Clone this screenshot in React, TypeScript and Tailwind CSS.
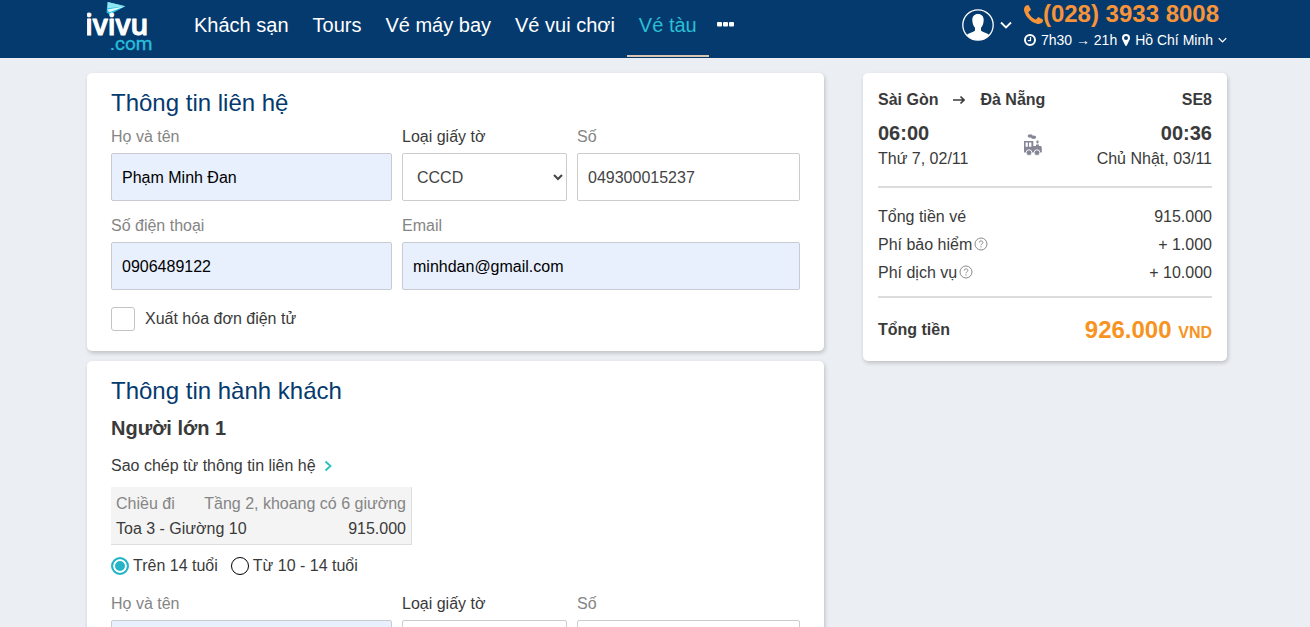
import React, { useId, useState } from 'react';

function Logo() {
  return (
    <svg viewBox="0 0 70 56" className="h-[56px] w-[70px]" role="img" aria-label="ivivu.com">
      <path d="M20.700 2 38.300 6.300 23 14.500 19.500 12.500Z" fill="#2cc4e0" />
      <path d="M20.700 2 38.300 6.300 20.400 8.200Z" fill="#8fe6f2" />
      <path d="M20.200 9.500 38.300 6.300 22.400 12.300Z" fill="#dff8fc" />
      <text
        x="-2"
        y="35"
        fontFamily="'Open Sans', sans-serif"
        fontSize="28"
        fontWeight="600"
        fill="#fff"
        stroke="#fff"
        strokeWidth="1"
        strokeLinejoin="round"
      >
        ivivu
      </text>
      <text x="23" y="50" fontFamily="Roboto, sans-serif" fontSize="19" fill="#27bfdc" stroke="#27bfdc" strokeWidth=".4">
        .com
      </text>
    </svg>
  );
}

function ChevronDown({ className }: { className: string }) {
  return (
    <svg viewBox="0 0 12 8" className={className} fill="none" stroke="currentColor" strokeWidth="1.8" aria-hidden="true">
      <path d="M1 1.5 6 6.5 11 1.5" />
    </svg>
  );
}

function Avatar() {
  return (
    <svg viewBox="0 0 32 32" className="h-8 w-8" aria-hidden="true">
      <circle cx="16" cy="16" r="15.2" fill="none" stroke="#fff" strokeWidth="1.3" />
      <path
        d="M16 5c-3.700 0-5.800 2.600-5.700 6 .1 3.200 1 6 2.700 7.700v2.800c-.8 1.600-6 2-8.200 4.500A14.800 14.800 0 0 0 16 31a14.800 14.800 0 0 0 11.200-5c-2.200-2.500-7.400-2.900-8.200-4.500v-2.800c1.700-1.700 2.600-4.500 2.700-7.700.1-3.400-2-6-5.700-6z"
        fill="#fff"
      />
    </svg>
  );
}

function Phone() {
  return (
    <svg viewBox="0 128 1408 1408" className="h-[19px] w-[19px]" fill="currentColor" aria-hidden="true">
      <path d="M1408 1240q0 27-10 70.5t-21 68.5q-21 50-122 106-94 51-186 51-27 0-53-3.500t-57.500-12.500-47-14.500-55.500-20.500-49-18q-98-35-175-83-127-79-264-216t-216-264q-48-77-83-175-3-9-18-49t-20.500-55.500-14.500-47-12.500-57.500-3.500-53q0-92 51-186 56-101 106-122 25-11 68.500-21t70.500-10q14 0 21 3 18 6 53 76 11 19 30 54t35 63.500 31 53.500q3 4 17.500 25t21.500 35.500 7 28.500q0 20-28.500 50t-62 55-62 53-28.500 46q0 9 5 22.500t8.500 20.500 14 24 11.500 19q76 137 174 235t235 174q2 1 19 11.500t24 14 20.500 8.500 22.500 5q18 0 46-28.500t53-62 55-62 50-28.500q14 0 28.500 7t35.500 21.500 25 17.500q25 15 53.500 31t63.500 35 54 30q70 35 76 53 3 7 3 21z" />
    </svg>
  );
}

function Clock() {
  return (
    <svg viewBox="0 0 12 12" className="h-3 w-3" fill="none" stroke="currentColor" aria-hidden="true">
      <circle cx="6" cy="6" r="5" strokeWidth="2" />
      <path d="M6.500 3v3.600H3.800" strokeWidth="1.200" />
    </svg>
  );
}

function Pin() {
  return (
    <svg viewBox="0 0 8 12" className="h-3 w-2" fill="currentColor" aria-hidden="true">
      <path
        fillRule="evenodd"
        d="M4 0a4 4 0 0 0-4 4c0 .7.100 1.200.4 1.700l2.800 5.800c.3.600 1.300.6 1.600 0l2.800-5.800c.3-.5.400-1 .4-1.700a4 4 0 0 0-4-4zm0 2a2 2 0 1 1 0 4 2 2 0 0 1 0-4z"
      />
    </svg>
  );
}

function Train() {
  return (
    <svg viewBox="0 0 18 22" className="h-[22px] w-[18px]" fill="#858796" aria-hidden="true">
      <ellipse cx="6.200" cy="2" rx="2.600" ry="1.700" />
      <ellipse cx="9.600" cy="3.300" rx="2.600" ry="1.700" />
      <path
        fillRule="evenodd"
        d="M0 7h9.300v5H12v-1.500h3V12h2.200l.6 2v4.500H0zM1.600 8.500v4.200h2.200V8.500zM5 8.500v4.200h2.400V8.500z"
      />
      <rect x="12.500" y="6.500" width="2" height="3" rx=".8" />
      <g stroke="#fff" strokeWidth=".9">
        <circle cx="5" cy="18.700" r="2.900" />
        <circle cx="13" cy="18.700" r="2.900" />
      </g>
    </svg>
  );
}

function Help({ label }: { label: string }) {
  return (
    <button type="button" aria-label={label} className="mb-[2px] text-[#8a8a8a]">
      <svg viewBox="0 0 14 14" className="h-[14px] w-[14px]" fill="none" stroke="currentColor" aria-hidden="true">
        <circle cx="7" cy="7" r="6" strokeWidth="1" />
        <path d="M5.200 5.600c0-2.300 3.700-2.300 3.700-.1C8.900 6.800 7 6.700 7 8.300M7 9.300v1.200" strokeWidth="1" />
      </svg>
    </button>
  );
}

const NAV = ['Khách sạn', 'Tours', 'Vé máy bay', 'Vé vui chơi', 'Vé tàu'];

function Header() {
  return (
    <header className="flex h-[58px] items-start justify-between bg-[#053a6e] pr-[83px] pl-[87px] text-white">
      <div className="flex">
        <a href="#home" aria-label="ivivu.com">
          <Logo />
        </a>
        <nav className="ml-[25px] flex items-start text-xl" aria-label="Chính">
          {NAV.map((item) => (
            <a
              key={item}
              href="#nav"
              className={
                item === 'Vé tàu'
                  ? 'h-[57px] border-b-2 border-[#d9c5b0] px-3 pt-[11px] leading-7 text-[#2abfd4]'
                  : 'h-[57px] px-3 pt-[11px] leading-7'
              }
            >
              {item}
            </a>
          ))}
          <button type="button" aria-label="Thêm" className="flex h-12 items-center px-2">
            <svg viewBox="0 0 17 5" className="h-[5px] w-[17px]" fill="#fff" aria-hidden="true">
              <rect width="5" height="4.500" rx="1" />
              <rect x="6" width="5" height="4.500" rx="1" />
              <rect x="12" width="5" height="4.500" rx="1" />
            </svg>
          </button>
        </nav>
      </div>
      <div className="flex items-start gap-3">
        <button type="button" aria-label="Tài khoản" className="mt-[9px] flex items-center gap-[6px]">
          <Avatar />
          <ChevronDown className="h-2 w-3" />
        </button>
        <div>
          <a href="tel:02839338008" className="flex h-7 items-center text-2xl font-bold text-[#f7943a]">
            <Phone />
            (028) 3933 8008
          </a>
          <button type="button" className="flex h-6 items-center gap-[5px] text-sm">
            <Clock />
            <span>7h30 → 21h</span>
            <Pin />
            <span>Hồ Chí Minh</span>
            <ChevronDown className="h-[6px] w-[9px]" />
          </button>
        </div>
      </div>
    </header>
  );
}

type FieldProps = {
  label: string;
  value?: string;
  type?: string;
  filled?: boolean;
  wide?: boolean;
};

function Field({ label, value = '', type = 'text', filled, wide }: FieldProps) {
  const id = useId();
  return (
    <div className={wide ? 'col-span-2 flex min-w-0 flex-col gap-1' : 'flex min-w-0 flex-col gap-1'}>
      <label htmlFor={id} className="leading-6 text-[#858585]">
        {label}
      </label>
      <input
        id={id}
        type={type}
        defaultValue={value}
        className={
          filled
            ? 'h-12 w-full rounded-xs border border-[#c8ccd2] bg-[#e8f0fe] px-[10px] pt-[2px] text-black'
            : 'h-12 w-full rounded-xs border border-[#cccccc] bg-white px-[10px] pt-[2px] text-[#444444]'
        }
      />
    </div>
  );
}

function DocumentSelect() {
  const id = useId();
  return (
    <div className="flex min-w-0 flex-col gap-1">
      <label htmlFor={id} className="leading-6">
        Loại giấy tờ
      </label>
      <select
        id={id}
        defaultValue="CCCD"
        className="h-12 w-full rounded-xs border border-[#cccccc] bg-white pl-[10px] text-[#444444]"
      >
        <option>CCCD</option>
      </select>
    </div>
  );
}

const GRID = 'grid grid-cols-[281fr_165fr_223fr] gap-x-[10px] gap-y-[13px]';
const CARD = 'rounded-[5px] bg-white shadow-[1px_2px_4px_rgba(0,0,0,0.2)]';

function ContactCard() {
  return (
    <section className={`${CARD} px-6 pt-[14px] pb-5`}>
      <h2 className="mb-[6px] text-2xl leading-8 text-[#053a6e]">Thông tin liên hệ</h2>
      <div className={GRID}>
        <Field label="Họ và tên" value="Phạm Minh Đan" filled />
        <DocumentSelect />
        <Field label="Số" value="049300015237" />
        <Field label="Số điện thoại" value="0906489122" type="tel" filled />
        <Field label="Email" value="minhdan@gmail.com" type="email" filled wide />
      </div>
      <label className="mt-[17px] flex items-center gap-[10px] leading-6">
        <input
          type="checkbox"
          className="h-6 w-6 appearance-none rounded-[3px] border border-[#c4c4c4] bg-white checked:bg-[#26bed6]"
        />
        Xuất hóa đơn điện tử
      </label>
    </section>
  );
}

const AGES = ['Trên 14 tuổi', 'Từ 10 - 14 tuổi'];

function PassengerCard() {
  const [age, setAge] = useState(AGES[0]);
  return (
    <section className={`${CARD} px-6 pt-[14px] pb-5`}>
      <h2 className="text-2xl leading-8 text-[#053a6e]">Thông tin hành khách</h2>
      <h3 className="mt-[7px] text-xl leading-7 font-bold">Người lớn 1</h3>
      <button type="button" className="mt-3 flex items-center gap-2 leading-6">
        Sao chép từ thông tin liên hệ
        <svg viewBox="0 0 8 12" className="h-3 w-2" fill="none" stroke="#26bfbf" strokeWidth="1.800" aria-hidden="true">
          <path d="M1.500 1.500 6.500 6 1.500 10.500" />
        </svg>
      </button>
      <div className="mt-[9px] w-[301px] border-r border-b border-[#dedede] bg-[#f4f4f4] px-[5px] pt-1 pb-[3px] leading-[25px]">
        <div className="flex justify-between text-[#858585]">
          <span>Chiều đi</span>
          <span>Tầng 2, khoang có 6 giường</span>
        </div>
        <div className="flex justify-between">
          <span>Toa 3 - Giường 10</span>
          <span>915.000</span>
        </div>
      </div>
      <div role="radiogroup" aria-label="Độ tuổi" className="mt-[9px] mb-[14px] flex gap-[13px]">
        {AGES.map((item) => (
          <label key={item} className="flex items-center gap-1 leading-6">
            <input
              type="radio"
              name="age"
              checked={age === item}
              onChange={() => setAge(item)}
              className="h-[18px] w-[18px] appearance-none rounded-full border border-black bg-white checked:border-2 checked:border-[#26b5c6] checked:bg-[#26b5c6] checked:shadow-[inset_0_0_0_2px_white]"
            />
            {item}
          </label>
        ))}
      </div>
      <div className={GRID}>
        <Field label="Họ và tên" filled />
        <DocumentSelect />
        <Field label="Số" />
      </div>
    </section>
  );
}

function Summary() {
  return (
    <aside className={`${CARD} w-[364px] shrink-0 p-[15px]`}>
      <div className="flex items-center leading-6 font-bold">
        <span>Sài Gòn</span>
        <svg viewBox="0 0 12 10" className="mx-[15px] h-[10px] w-3" fill="none" stroke="currentColor" strokeWidth="1.600" aria-label="đến">
          <path d="M0 5h11M7.500 1.500 11 5 7.500 8.500" />
        </svg>
        <span>Đà Nẵng</span>
        <span className="ml-auto">SE8</span>
      </div>
      <div className="mt-[7px] flex items-center justify-between">
        <div>
          <div className="text-xl leading-7 font-bold">06:00</div>
          <div className="leading-6">Thứ 7, 02/11</div>
        </div>
        <Train />
        <div className="text-right">
          <div className="text-xl leading-7 font-bold">00:36</div>
          <div className="leading-6">Chủ Nhật, 03/11</div>
        </div>
      </div>
      <hr className="mt-[15px] border-t-2 border-[#dcdcdc]" />
      <dl className="mt-[15px] mb-[9px] leading-7">
        <div className="flex justify-between">
          <dt>Tổng tiền vé</dt>
          <dd>915.000</dd>
        </div>
        <div className="flex justify-between">
          <dt className="flex items-center gap-[2px]">
            Phí bảo hiểm
            <Help label="Giải thích phí bảo hiểm" />
          </dt>
          <dd>+ 1.000</dd>
        </div>
        <div className="flex justify-between">
          <dt className="flex items-center gap-[2px]">
            Phí dịch vụ
            <Help label="Giải thích phí dịch vụ" />
          </dt>
          <dd>+ 10.000</dd>
        </div>
      </dl>
      <hr className="border-t-2 border-[#dcdcdc]" />
      <div className="mt-4 flex items-center justify-between leading-8 font-bold">
        <span>Tổng tiền</span>
        <span className="text-2xl leading-8 text-[#f79321]">
          926.000 <span className="text-base">VND</span>
        </span>
      </div>
    </aside>
  );
}

export default function App() {
  return (
    <div className="min-h-screen bg-[#ebeef3] font-['Liberation_Sans',Arial,sans-serif] text-base text-[#3a3a3a]">
      <Header />
      <main className="flex items-start gap-[39px] pt-[15px] pr-[83px] pb-10 pl-[87px]">
        <div className="flex min-w-0 flex-1 flex-col gap-[10px]">
          <ContactCard />
          <PassengerCard />
        </div>
        <Summary />
      </main>
    </div>
  );
}
